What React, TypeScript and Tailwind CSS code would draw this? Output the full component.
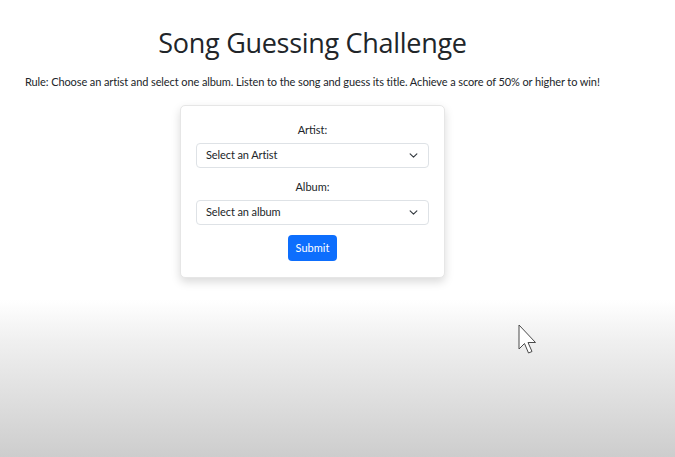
import React from "react";

function Chevron() {
  return (
    <svg width="9" height="9" viewBox="0 0 16 16" fill="none" stroke="#343a40" strokeWidth="2" strokeLinecap="round" strokeLinejoin="round">
      <path d="M2 5l6 6 6-6" />
    </svg>
  );
}

function SelectBox({ text }: { text: string }) {
  return (
    <div className="flex h-[25px] w-[233px] items-center justify-between rounded-[4px] border border-[#dee2e6] bg-white pl-[9px] pr-[10px] text-[11px] tracking-[-0.1px] text-[#212529]">
      <span>{text}</span>
      <Chevron />
    </div>
  );
}

export default function App() {
  return (
    <div
      className="relative h-[457px] w-[675px] overflow-hidden bg-[linear-gradient(to_bottom,#ffffff_0px,#ffffff_300px,#f0f0f0_340px,#cdcdcd_457px)] text-[#212529]"
      style={{ fontFamily: 'Lato, "Open Sans", sans-serif' }}
    >
      <div className="flex flex-col items-center pt-[24px]">
        <h1
          className="ml-[-50px] text-[27px] font-medium leading-[38px] tracking-[-0.3px]"
          style={{ fontFamily: '"Open Sans", sans-serif' }}
        >
          Song Guessing Challenge
        </h1>
        <p className="mt-[11px] w-full whitespace-nowrap pl-[25px] text-[11px] leading-[18px] tracking-[-0.1px]">
          Rule: Choose an artist and select one album. Listen to the song and guess its title. Achieve a score of 50% or higher to win!
        </p>
        <div className="ml-[-50px] mt-[14px] flex w-[265px] flex-col items-center rounded-[5px] border border-[#e6e6e6] bg-white pb-[16px] pt-[15px] shadow-[0_4px_10px_rgba(0,0,0,0.15)]">
          <label className="text-[11px] leading-[18px]">Artist:</label>
          <div className="mt-[4px]">
            <SelectBox text="Select an Artist" />
          </div>
          <label className="mt-[10px] text-[11px] leading-[18px]">Album:</label>
          <div className="mt-[4px]">
            <SelectBox text="Select an album" />
          </div>
          <button className="mt-[10px] h-[26px] rounded-[4px] bg-[#0d6efd] px-[8px] text-[11px] text-white">Submit</button>
        </div>
      </div>
      <svg className="absolute left-[518px] top-[324px]" width="22" height="34" viewBox="0 0 22 34">
        <path d="M1 1 L1 25 L6.5 19.5 L10.5 29 L14 27.5 L10 18.5 L17.5 18.5 Z" fill="#ffffff" stroke="#4a4a4a" strokeWidth="1" strokeLinejoin="miter" />
      </svg>
    </div>
  );
}
